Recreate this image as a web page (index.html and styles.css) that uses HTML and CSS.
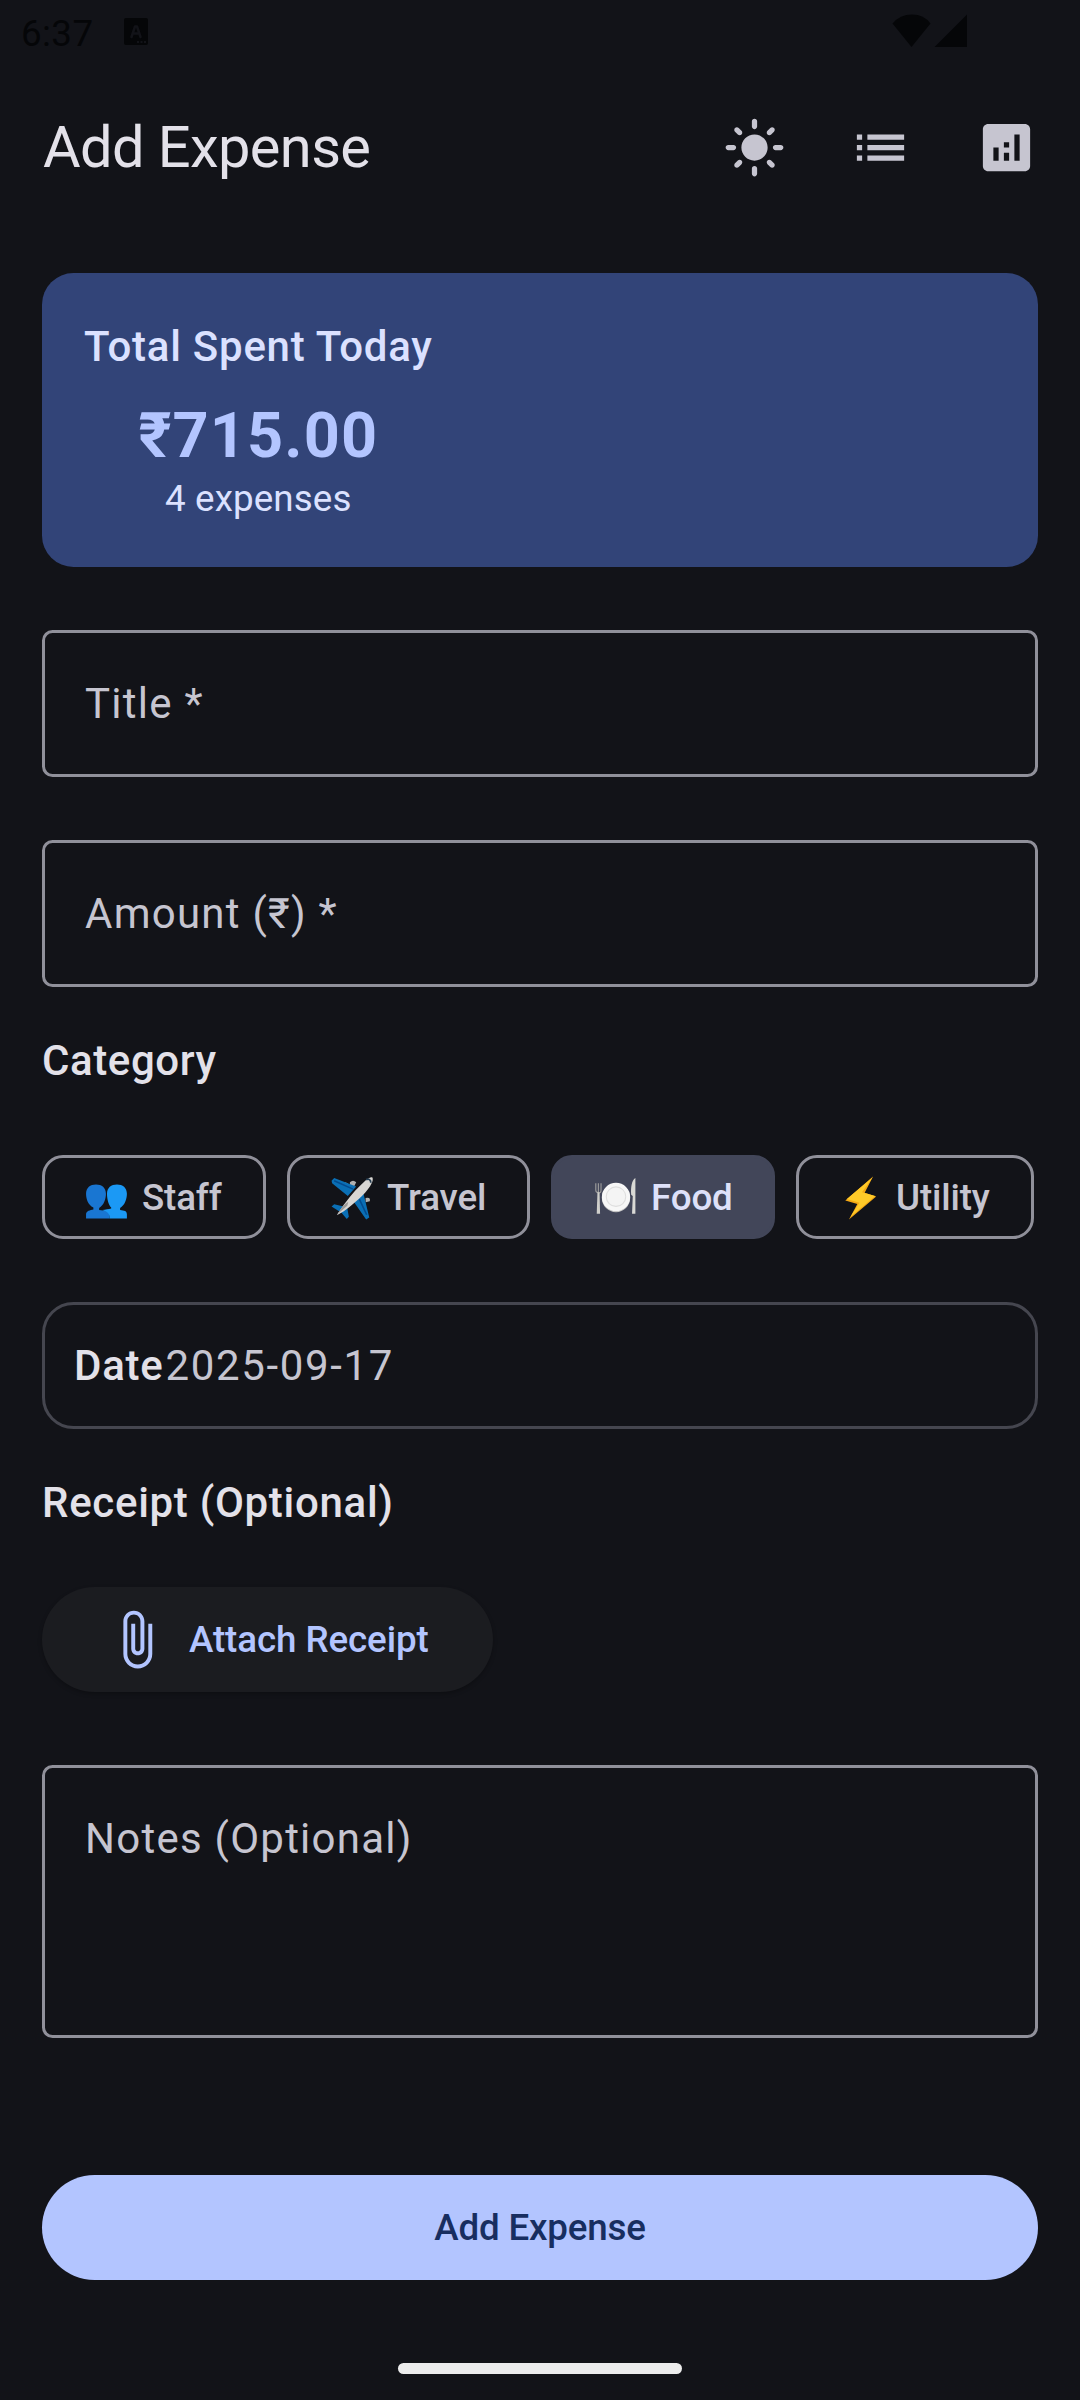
FILE: index.html
```html
<!DOCTYPE html>
<html lang="en">
<head>
<meta charset="utf-8">
<title>Add Expense</title>
<link rel="stylesheet" href="styles.css">
</head>
<body>
<div class="screen">
  <div class="status-bar">
    <span class="clock">6:37</span>
    <svg class="status-app" viewBox="0 0 24 27"><rect width="24" height="27" rx="2" fill="#050608"/><path d="M7.5 19 11 8.5h2L16.500 19M9 15.500h6" fill="none" stroke="#121318" stroke-width="2.500" stroke-linecap="round" stroke-linejoin="round"/><path d="M13 23h2v2h-2zM16.500 23h2v2h-2zM20 23h2v2h-2z" fill="#121318"/></svg>
    <svg class="status-signal" viewBox="0 0 76 34"><path d="M0.500 9.500Q8 0.500 20 0.500T38.500 9.500L19.500 33Z" fill="#050608"/><path d="M75 0.500V33H42.500Z" fill="#050608"/></svg>
  </div>
  <header class="app-bar">
    <h1 class="app-title">Add Expense</h1>
    <nav class="actions">
      <svg class="icon" viewBox="0 0 24 24"><path d="M12 7c-2.760 0-5 2.240-5 5s2.240 5 5 5 5-2.240 5-5-2.240-5-5-5zM2 13h2c.55 0 1-.45 1-1s-.45-1-1-1H2c-.55 0-1 .45-1 1s.45 1 1 1zm18 0h2c.55 0 1-.45 1-1s-.45-1-1-1h-2c-.55 0-1 .45-1 1s.45 1 1 1zM11 2v2c0 .55.45 1 1 1s1-.45 1-1V2c0-.55-.45-1-1-1s-1 .45-1 1zm0 18v2c0 .55.45 1 1 1s1-.45 1-1v-2c0-.55-.45-1-1-1s-1 .45-1 1zM5.990 4.580c-.39-.39-1.030-.39-1.410 0-.39.39-.39 1.030 0 1.410l1.060 1.060c.39.39 1.030.39 1.410 0s.39-1.030 0-1.410L5.990 4.580zm12.370 12.370c-.39-.39-1.030-.39-1.410 0-.39.39-.39 1.030 0 1.410l1.060 1.060c.39.39 1.030.39 1.410 0 .39-.39.39-1.030 0-1.410l-1.060-1.060zm1.060-10.960c.39-.39.39-1.030 0-1.410-.39-.39-1.030-.39-1.410 0l-1.060 1.060c-.39.39-.39 1.030 0 1.410s1.030.39 1.410 0l1.060-1.060zM7.050 18.360c.39-.39.39-1.030 0-1.410-.39-.39-1.030-.39-1.410 0l-1.060 1.060c-.39.39-.39 1.030 0 1.410s1.030.39 1.410 0l1.060-1.060z"/></svg>
      <svg class="icon" viewBox="0 0 24 24"><path d="M3 13h2v-2H3v2zm0 4h2v-2H3v2zm0-8h2V7H3v2zm4 4h14v-2H7v2zm0 4h14v-2H7v2zM7 7v2h14V7H7z"/></svg>
      <svg class="icon" viewBox="0 0 24 24"><path d="M19 3H5c-1.100 0-2 .9-2 2v14c0 1.100.9 2 2 2h14c1.100 0 2-.9 2-2V5c0-1.100-.9-2-2-2zM9 17H7v-5h2v5zm4 0h-2v-3h2v3zm0-5h-2v-2h2v2zm4 5h-2V7h2v10z"/></svg>
    </nav>
  </header>
  <main class="content">
    <section class="summary">
      <div class="summary-inner">
        <div class="summary-title">Total Spent Today</div>
        <div class="summary-amount">₹715.00</div>
        <div class="summary-count">4 expenses</div>
      </div>
    </section>
    <div class="field">Title *</div>
    <div class="field">Amount (₹) *</div>
    <h2 class="section-title">Category</h2>
    <div class="chips">
      <div class="chip chip-staff">
        <svg class="emoji" viewBox="0 0 42 42"><path d="M1 40.500v-4c0-3 4-4 7-4.500v-2C3 28 1 22 1 17 1 11 5 8 10.500 8S20 11 20 17c0 5-2 11-6.500 13.500v2c5 .5 9 1.500 10 4v4z" fill="#1976d2"/><path d="M16.500 32.500c3-.5 6-.8 8.500-1.500v-1C22.500 28 21 22 21 17c0-6 4-9 9.500-9S40 11 40 17c0 5-2 11-6.500 13.500v2c4 .5 6.500 1 6.500 4v4H23.500c.5-4-2-6.500-7-8z" fill="#1b99f5"/></svg>
        <span>Staff</span>
      </div>
      <div class="chip chip-travel">
        <svg class="emoji" viewBox="0 0 42 42"><path d="M19 6q3-3 6 0l-2 4-4-1zM34 21q5-1 4 3l-4 1zM14 6l3 1-1 2z" fill="#b0b0b0"/><path d="M1.500 4.500 4 2l21 8-8 9L2 7zM32 17l-9 8 11.500 16.500 3-2zM1.500 29l2.500-2 9 2-4 5zM10 34l6-6 2 11-2 2z" fill="#0a6fb5"/><path d="m4 4.500 18 8M35 37 28 22" fill="none" stroke="#034b8f" stroke-width="1.500"/><path d="M40.500 1.500c1.500 3-2 9-7 14.500C26 24 14 34 6.500 37.500c5-8 13-19 20.500-26.500 5-5 11-11 13.500-9.500z" fill="#d8d6d3"/><path d="M7 36.500c3-5 7-10 10.500-12l-1 4z" fill="#9b9997"/><path d="M34.500 3.500c2-1 4.500-.5 4.500 3" fill="none" stroke="#263e52" stroke-width="1.700"/></svg>
        <span>Travel</span>
      </div>
      <div class="chip chip-food chip-selected">
        <svg class="emoji" viewBox="0 0 42 42"><path d="M1.700 7v6.500q0 2 2.500 2.500t2.500-2.500V7M4.200 7v9" fill="none" stroke="#9a9a9a" stroke-width="1.100"/><path d="M3.300 15.500h2l.5 20.500H2.600z" fill="#cfcfcb"/><path d="M35.500 18c-.5-7 .5-14 4-16v34h-3.200l.7-17z" fill="#d9d9d5"/><circle cx="21" cy="21" r="13.500" fill="#c4c4c4"/><circle cx="21" cy="20" r="13.500" fill="#f7f7f7"/><circle cx="21" cy="19.700" r="9.300" fill="#f4f4f4" stroke="#dedede" stroke-width="1"/></svg>
        <span>Food</span>
      </div>
      <div class="chip chip-utility">
        <svg class="emoji" viewBox="0 0 42 42"><path d="M32.500 0.500 6 23.500l11.500 3.200L9.500 41.500 35.500 19.500l-11-3.500z" fill="#f5a914"/><path d="M32 1.500 7.500 22l12 3.500-8.500 13.500L34.500 19l-12.500-3.500z" fill="#ffca28"/></svg>
        <span>Utility</span>
      </div>
    </div>
    <div class="date-box"><span class="date-label">Date</span><span class="date-value">2025-09-17</span></div>
    <h2 class="section-title section-receipt">Receipt (Optional)</h2>
    <button class="attach">
      <svg class="clip" viewBox="0 0 24 24"><path d="M16.500 6v11.500c0 2.210-1.790 4-4 4s-4-1.790-4-4V5c0-1.380 1.120-2.500 2.500-2.500s2.500 1.120 2.500 2.500v10.500c0 .55-.45 1-1 1s-1-.45-1-1V6H10v9.500c0 1.380 1.120 2.500 2.500 2.500s2.500-1.120 2.500-2.500V5c0-2.210-1.790-4-4-4S7 2.790 7 5v12.500c0 3.040 2.460 5.500 5.500 5.500s5.500-2.460 5.500-5.500V6h-1.500z"/></svg>
      <span class="button-label">Attach Receipt</span>
    </button>
    <div class="field field-notes">Notes (Optional)</div>
    <button class="submit"><span class="button-label">Add Expense</span></button>
  </main>
  <div class="nav-handle"></div>
</div>
</body>
</html>
```
FILE: styles.css
```css
* { box-sizing: border-box; }

body {
  margin: 0;
  background: #121318;
  color: #e3e1e9;
  font-family: Roboto, "Noto Sans", sans-serif;
}

.screen {
  width: 1080px;
  height: 2400px;
  display: flex;
  flex-direction: column;
  overflow: hidden;
}

.status-bar {
  height: 63px;
  flex: none;
  display: flex;
  align-items: flex-start;
  padding: 14px 112px 0 21px;
  color: #050608;
}

.clock {
  width: 103px;
  font-size: 36.75px;
  line-height: 39px;
  letter-spacing: 0.4px;
}

.status-app {
  width: 24px;
  height: 27px;
  margin-top: 4px;
}

.status-signal {
  width: 76px;
  height: 34px;
  margin-left: auto;
}

.app-bar {
  height: 168px;
  flex: none;
  display: flex;
  align-items: center;
  justify-content: space-between;
  padding: 0 42px 0 43px;
}

.app-title {
  margin: 0;
  padding-top: 1px;
  font-size: 57.75px;
  font-weight: 400;
  line-height: 73.5px;
  letter-spacing: -0.6px;
}

.actions {
  display: flex;
  gap: 63px;
}

.icon {
  width: 63px;
  height: 63px;
  fill: #c6c5d0;
}

.content {
  display: flex;
  flex-direction: column;
  align-items: stretch;
  padding: 42px 42px 0;
}

.summary {
  height: 294px;
  border-radius: 31.5px;
  background: #324478;
  padding: 42px;
  display: flex;
  color: #dbe1ff;
}

.summary-inner {
  display: flex;
  flex-direction: column;
  align-items: center;
}

.summary-title {
  font-size: 42px;
  font-weight: 500;
  line-height: 63px;
  letter-spacing: 0.75px;
}

.summary-amount {
  margin-top: 21px;
  font-size: 63px;
  font-weight: 700;
  line-height: 74px;
  letter-spacing: 1.1px;
  color: #b3c5ff;
}

.summary-count {
  font-size: 36.75px;
  line-height: 52.5px;
  letter-spacing: 0.12px;
}

.field {
  height: 147px;
  margin-top: 63px;
  padding: 39px 40px;
  border: 3px solid #90909a;
  border-radius: 10.5px;
  font-size: 42px;
  line-height: 63px;
  letter-spacing: 1.25px;
  color: #c6c5d0;
}

.section-title {
  margin: 42px 0 0;
  font-size: 42px;
  font-weight: 500;
  line-height: 63px;
  letter-spacing: 0.6px;
}

.section-receipt {
  letter-spacing: 0.7px;
}

.chips {
  display: flex;
  gap: 21px;
  margin-top: 63px;
}

.chip {
  height: 84px;
  display: flex;
  align-items: center;
  gap: 13px;
  padding: 2px 0 0 40px;
  border: 3px solid #90909a;
  border-radius: 21px;
  font-size: 36.75px;
  font-weight: 500;
  line-height: 52.5px;
  letter-spacing: -0.15px;
  color: #c6c5d0;
}

.chip-staff { width: 224px; }
.chip-travel { width: 243px; }
.chip-food { width: 224px; }
.chip-utility { width: 238px; }

.chip-selected {
  border-color: #424659;
  background: #424659;
  color: #dee1f9;
}

.emoji {
  width: 44px;
  height: 44px;
  flex: none;
}

.date-box {
  height: 127px;
  margin-top: 63px;
  padding: 28.5px 29px;
  border: 3px solid #45464f;
  border-radius: 31.5px;
  display: flex;
  gap: 2px;
  font-size: 42px;
  line-height: 63px;
}

.date-label {
  font-weight: 500;
  letter-spacing: 0.73px;
}

.date-value {
  letter-spacing: 1.65px;
  color: #c6c5d0;
}

.attach {
  width: 451px;
  height: 105px;
  margin-top: 53px;
  padding: 0 0 0 63px;
  border: 0;
  border-radius: 52.5px;
  display: flex;
  align-items: center;
  gap: 21px;
  background: #1b1c20;
  box-shadow: 0 2px 4px rgba(0, 0, 0, 0.25);
  color: #b3c5ff;
  font: 500 36.75px/52.5px Roboto, sans-serif;
  letter-spacing: -0.1px;
}

.clip {
  width: 63px;
  height: 63px;
  fill: #b3c5ff;
}

.button-label {
  padding-top: 2px;
}

.field-notes {
  height: 273px;
  margin-top: 73px;
}

.submit {
  height: 105px;
  margin-top: 137px;
  padding: 0;
  border: 0;
  border-radius: 52.5px;
  display: flex;
  align-items: center;
  justify-content: center;
  background: #b3c5ff;
  color: #182e60;
  font: 500 36.75px/52.5px Roboto, sans-serif;
  letter-spacing: -0.2px;
}

.nav-handle {
  width: 284px;
  height: 11px;
  margin: 83px auto 0;
  border-radius: 6px;
  background: #ececec;
}
```
